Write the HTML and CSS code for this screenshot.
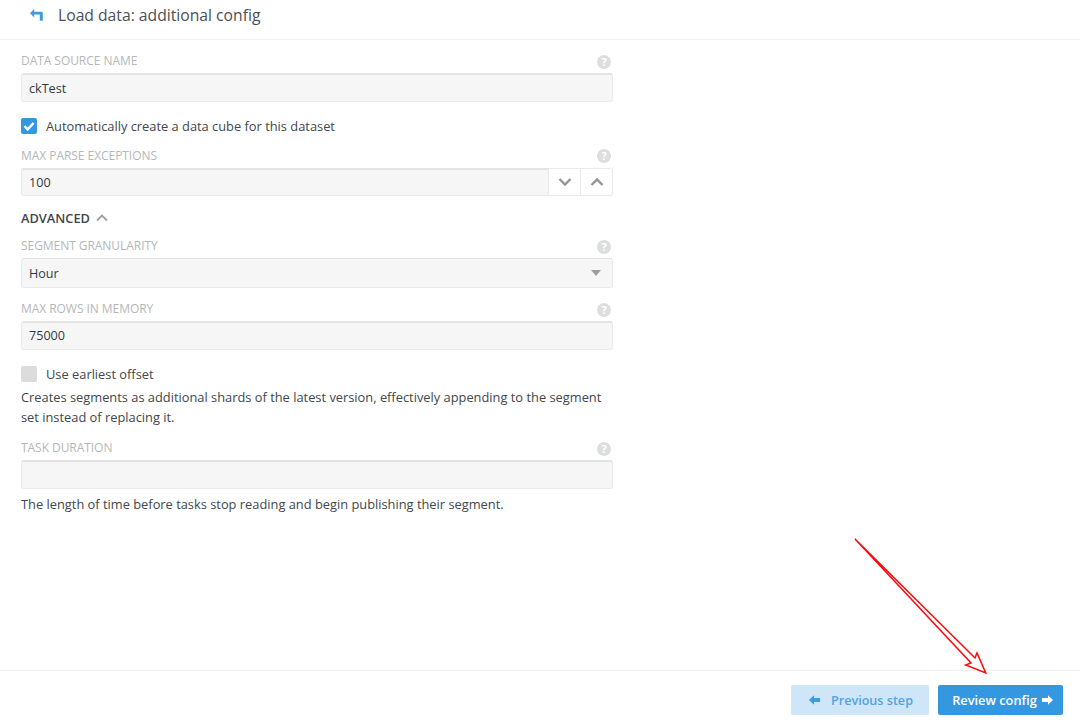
FILE: index.html
```html
<!DOCTYPE html>
<html lang="en">
<head>
<meta charset="utf-8">
<title>Load data: additional config</title>
<link rel="stylesheet" href="styles.css">
</head>
<body>
<div class="page">
  <header class="header">
    <svg class="back-icon" width="16" height="16" viewBox="0 0 16 16"><path d="M5.200 2 1 6.200l4.200 4.200V7.500h5.600v6.200h3V6.300c0-.9-.6-1.500-1.500-1.500H5.200z" fill="#3d9be0"/></svg>
    <h1 class="title">Load data: additional config</h1>
  </header>
  <main class="form">
    <div class="label-row lr-first"><span class="label">Data source name</span><span class="help">?</span></div>
    <div class="input h29">ckTest</div>
    <label class="check"><span class="box on"><svg width="16" height="16" viewBox="0 0 16 16"><path d="M3.500 8.200 6.700 11.400 12.500 5" fill="none" stroke="#fff" stroke-width="2.400"/></svg></span>Automatically create a data cube for this dataset</label>
    <div class="label-row lr2"><span class="label">Max parse exceptions</span><span class="help help-up">?</span></div>
    <div class="numeric">
      <div class="input grow">100</div>
      <div class="step"><svg width="14" height="10" viewBox="0 0 14 10"><path d="M1.500 2 7 7.500 12.500 2" fill="none" stroke="#8f9599" stroke-width="2.400"/></svg></div>
      <div class="step"><svg width="14" height="10" viewBox="0 0 14 10"><path d="M1.500 8 7 2.500 12.500 8" fill="none" stroke="#8f9599" stroke-width="2.400"/></svg></div>
    </div>
    <div class="advanced">ADVANCED <svg width="12" height="8" viewBox="0 0 12 8"><path d="M1 6.500 6 1.500l5 5" fill="none" stroke="#9aa0a4" stroke-width="1.800"/></svg></div>
    <div class="label-row lr3"><span class="label">Segment granularity</span><span class="help">?</span></div>
    <div class="input h30 select">Hour<span class="caret"></span></div>
    <div class="label-row lr2"><span class="label">Max rows in memory</span><span class="help">?</span></div>
    <div class="input h29 thin-top">75000</div>
    <label class="check"><span class="box off"></span>Use earliest offset</label>
    <p class="desc d1">Creates segments as additional shards of the latest version, effectively appending to the segment set instead of replacing it.</p>
    <div class="label-row lr2"><span class="label">Task duration</span><span class="help">?</span></div>
    <div class="input h29"></div>
    <p class="desc d2">The length of time before tasks stop reading and begin publishing their segment.</p>
  </main>
  <footer class="footer">
    <button class="btn prev"><svg width="13" height="12" viewBox="0 0 14 12"><path d="M6.500.8 1 6l5.500 5.200V8.200H13V3.800H6.500z" fill="#3d9be0"/></svg><span class="gap">Previous step</span></button>
    <button class="btn next">Review config <svg width="13" height="12" viewBox="0 0 14 12"><path d="M7.500.8 13 6l-5.500 5.200V8.200H1V3.800h6.500z" fill="#fff"/></svg></button>
  </footer>
  <svg class="annotation" width="150" height="150" viewBox="0 0 150 150">
    <path d="M5 6 125 125 127 120 135.700 140 115.700 132 121 130z" fill="none" stroke="#fa0a0a" stroke-width="1.500"/>
  </svg>
</div>
</body>
</html>
```
FILE: styles.css
```css
* { box-sizing: border-box; }
html, body { margin: 0; padding: 0; }
body { font-family: "Open Sans", sans-serif; color: #3f4549; background: #fff; }
.page { position: relative; width: 1080px; height: 725px; display: flex; flex-direction: column; overflow: hidden; }
.header { height: 40px; flex: none; display: flex; align-items: flex-start; padding: 7px 0 0 29px; border-bottom: 1px solid #eef0f1; }
.back-icon { flex: none; }
.title { margin: -2px 0 0 13px; font-size: 15.700px; line-height: 20px; font-weight: 400; color: #4a5054; }
.form { flex: 1; width: 634px; padding: 0 21px; }
.label-row { height: 16px; display: flex; justify-content: space-between; align-items: center; }
.lr-first { margin-top: 12px; }
.lr2 { margin-top: 12px; }
.lr3 { margin-top: 10px; }
.label { font-size: 12px; letter-spacing: -.05px; text-transform: uppercase; color: #b4b7b9; }
.help { width: 14px; height: 14px; margin: 3px 2px 0 0; border-radius: 50%; background: #dcdedf; color: #fff; font-size: 11px; font-weight: 700; line-height: 14px; text-align: center; }
.help-up { margin-top: 1px; }
.input { width: 100%; margin-top: 5px; padding: 0 7px; display: flex; align-items: center; font-size: 12.600px; color: #33393d; background: #f6f6f6; border: 1px solid #e9eaeb; border-top: 2px solid #e2e3e4; border-radius: 3px; }
.h30 { height: 30px; }
.h29 { height: 29px; }
.thin-top { padding-bottom: 2px; }
.select { position: relative; justify-content: space-between; border-top-width: 1px; }
.caret { margin-right: 4px; border-left: 5px solid transparent; border-right: 5px solid transparent; border-top: 6px solid #9a9ea1; }
.numeric { display: flex; margin-top: 5px; height: 28px; }
.numeric .input { margin-top: 0; }
.grow { flex: 1; width: auto; border-radius: 3px 0 0 3px; }
.step { width: 32px; flex: none; display: flex; align-items: center; justify-content: center; border: 1px solid #e9eaeb; border-left: 0; background: #fff; }
.step:last-child { border-radius: 0 3px 3px 0; }
.check { display: flex; align-items: center; height: 18px; margin-top: 15px; font-size: 12.850px; color: #41474b; }
.box { width: 16px; height: 16px; margin-right: 9px; border-radius: 2px; flex: none; display: block; }
.box svg { display: block; }
.on { background: #3498e0; }
.off { background: #dcdcdc; }
.advanced { margin-top: 13px; height: 18px; display: flex; align-items: center; gap: 6px; font-size: 12.800px; font-weight: 600; color: #3f4549; }
.desc { margin: 0; font-size: 12.850px; line-height: 20px; color: #41474b; }
.d1 { margin-top: 4px; }
.d2 { margin-top: 5px; }
.footer { height: 55px; flex: none; display: flex; justify-content: flex-end; gap: 9px; padding: 14px 17px 0 0; border-top: 1px solid #eef0f1; }
.btn { height: 30px; border: 0; border-radius: 2px; font-family: inherit; font-size: 12.800px; font-weight: 600; display: flex; align-items: center; justify-content: center; padding: 0; }
.prev { width: 138px; padding-left: 1px; background: #cfe6f8; color: #4ea4e4; font-size: 12.600px; }
.gap { margin-left: 10px; }
.next { width: 125px; padding-left: 5px; background: #3498e0; color: #fff; gap: 4px; }
.annotation { position: absolute; left: 850px; top: 533px; }
```
